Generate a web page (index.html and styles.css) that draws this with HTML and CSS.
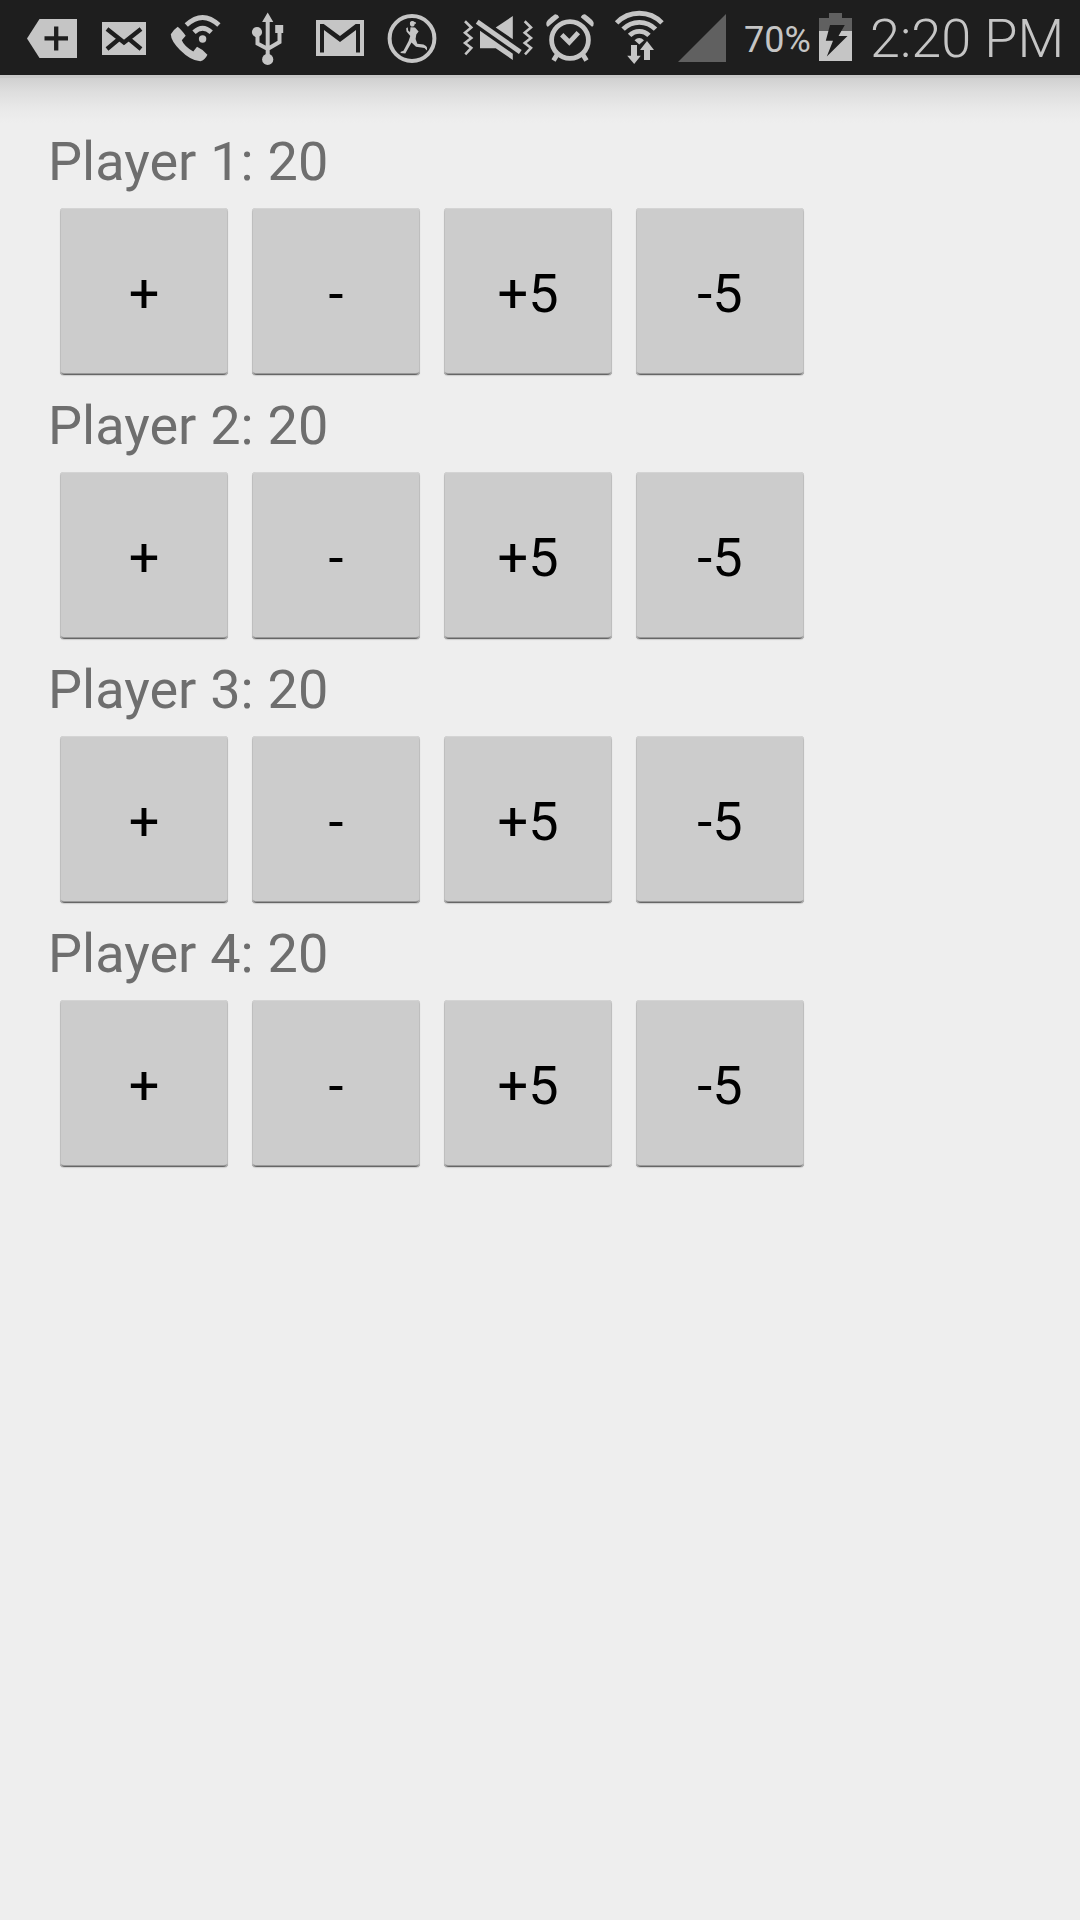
FILE: index.html
```html
<!DOCTYPE html>
<html lang="en">
<head>
<meta charset="utf-8">
<title>Life Counter</title>
<link rel="stylesheet" href="styles.css">
</head>
<body>
<header class="status-bar">
  <svg class="icon" width="90" height="75" viewBox="0 0 90 75"><path d="M27 38.5 39.5 19H77V58H39.5Z"/><path class="cut" d="M44.5 38.3H68M56.2 26.5V50.5"/></svg>
  <svg class="icon" width="70" height="75" viewBox="90 0 70 75"><path d="M102 22h44v33h-44z"/><path class="cut" d="M107 29 124 42.5 141 29M107 49 119 39M141 49 129 39"/></svg>
  <svg class="icon" width="80" height="75" viewBox="160 0 80 75"><path d="M177.7 26.7Q181 29 185.7 35.7L181.8 40.2Q184 46 193.3 51.5L197 46.8Q203 49.5 207.4 54.7Q205 60 200.3 61.3Q191 61 180 50Q171 41 170.8 34.3Q173 30 177.7 26.7Z"/><circle cx="202.6" cy="39" r="3.7"/><path class="line w5" d="M194 32.3Q202.6 24.3 211.2 32.3M186.3 25Q202.6 9.8 218.9 25"/></svg>
  <svg class="icon" width="60" height="75" viewBox="240 0 60 75"><path d="M267.7 12.5 273.3 22H262.1ZM275.2 25h8v8h-8z"/><circle cx="257" cy="32" r="5.1"/><circle cx="267.7" cy="59.4" r="5.6"/><path class="line w4" d="M267.7 20V56M257.5 34V43.5L267.7 49L279.5 42V30"/></svg>
  <svg class="icon" width="80" height="75" viewBox="300 0 80 75"><path d="M316 20h48v36h-48z"/><path class="hole" d="M320 24H323.7L340 36 355.7 24H360V52.5H356V30L340 42 324 30V52.5H320Z"/></svg>
  <svg class="icon" width="70" height="75" viewBox="380 0 70 75"><circle class="line w4" cx="412" cy="38.5" r="22.4"/><ellipse cx="412.3" cy="23.8" rx="2.4" ry="2.8"/><path d="M409.8 22.5Q411.5 20.5 415.8 22.2V24L412 23ZM410.5 27.2 415 27.5 418.6 31.5 416.3 34.5 415.6 39 417.3 43.7 423.5 44.4 426 46 427 47.5V50.5L424.5 48 416 46.7 411.5 42.5 405.3 53.5 400.5 53 400.8 51.8 403.5 50.8 408.6 41 410.3 36 406.5 31.6 406.2 28.3 407.7 27.3 408.2 30.8 410 32Z"/></svg>
  <svg class="icon" width="90" height="75" viewBox="450 0 90 75"><path d="M512.8 16V39.3L495.7 27.5ZM480 30.8 512.8 53.7V60L495.7 48.3H480Z"/><path class="line w5" d="M477.2 21.7 520.3 52"/><path class="line w2" d="M465 21.3 471.3 27.5 465 32.8 471.3 38 465 43 471.3 48 465.3 54.3M524.7 21.3 531 27.5 524.7 32.8 531 38 524.7 43 531 48 525 54.3"/></svg>
  <svg class="icon" width="60" height="75" viewBox="540 0 60 75"><circle class="line w5" cx="570" cy="40" r="18.4"/><path class="line w5" d="M561.7 34.8 569.3 42.3 578.3 32.7M557.5 54 553.5 60.5M582.5 54 586.5 60.5"/><path d="M546.3 23.5Q546 20.5 555 14.3Q558 14.2 559.2 17.2L548 26.7Q546.2 26.5 546.3 23.5ZM593.7 23.5Q594 20.5 585 14.3Q582 14.2 580.8 17.2L592 26.7Q593.8 26.5 593.7 23.5Z"/></svg>
  <svg class="icon" width="65" height="75" viewBox="600 0 65 75"><path class="line w5" d="M616.6 22.9A31.5 31.5 0 0 1 662 22.9M623.1 29.2A22.5 22.5 0 0 1 655.5 29.2M629.6 35.4A13.5 13.5 0 0 1 649 35.4"/><path d="M634.5 40.2Q639.3 35.6 644 40.2L639.3 44.6ZM631 45H637V55.7H640.8L634.2 64 627.2 55.7H631ZM647 41 654 50H650V60H644V50H640Z"/></svg>
  <svg class="icon" width="79" height="75" viewBox="665 0 79 75"><path class="dim" d="M678 62 726 14V62Z"/></svg>
  <span class="battery-level">70%</span>
  <svg class="icon" width="45" height="75" viewBox="815 0 45 75"><path class="dim" d="M819 18H829V13H842V18H852V31H819Z"/><path d="M819 31h33v30h-33z"/><path class="hole" d="M830 25H844.8L838.5 36H847.5L826.8 56.5 833 40.7H825.8Z"/></svg>
  <time class="clock">2:20 PM</time>
</header>
<main class="players">
  <section class="player">
    <h2 class="score">Player 1: 20</h2>
    <div class="controls"><button>+</button><button>-</button><button>+5</button><button>-5</button></div>
  </section>
  <section class="player">
    <h2 class="score">Player 2: 20</h2>
    <div class="controls"><button>+</button><button>-</button><button>+5</button><button>-5</button></div>
  </section>
  <section class="player">
    <h2 class="score">Player 3: 20</h2>
    <div class="controls"><button>+</button><button>-</button><button>+5</button><button>-5</button></div>
  </section>
  <section class="player">
    <h2 class="score">Player 4: 20</h2>
    <div class="controls"><button>+</button><button>-</button><button>+5</button><button>-5</button></div>
  </section>
</main>
</body>
</html>
```
FILE: styles.css
```css
* { box-sizing: border-box; }

body {
  margin: 0;
  width: 1080px;
  height: 1920px;
  overflow: hidden;
  background: #eee;
  font-family: Roboto, "Liberation Sans", sans-serif;
}

.status-bar {
  display: flex;
  height: 75px;
  background: #1e1e1e;
  color: #c5c5c5;
}

.icon { flex: none; fill: #c5c5c5; }
.icon .dim { fill: #606060; }
.icon .hole { fill: #1e1e1e; }
.icon .cut { fill: none; stroke: #1e1e1e; stroke-width: 4.3; }
.icon .line { fill: none; stroke: #c5c5c5; }
.icon .w2 { stroke-width: 2.6; }
.icon .w4 { stroke-width: 4; }
.icon .w5 { stroke-width: 4.8; }

.battery-level {
  flex: none;
  width: 71px;
  font-size: 36px;
  line-height: 80px;
}

.clock {
  flex: none;
  padding-left: 10px;
  font-size: 54px;
  font-weight: 300;
  line-height: 77px;
  white-space: nowrap;
}

.players {
  height: 1845px;
  padding: 51px 48px 0;
  background: linear-gradient(#c8c8c8 0 3px, #d0d0d0 3px, #dedede 17px, #e9e9e9 34px, #eee 48px) no-repeat 0 0 / 100% 48px;
}

.player { height: 264px; }

.score {
  margin: 0;
  height: 82px;
  color: #6e6e6e;
  font-size: 54px;
  font-weight: 400;
  line-height: 71px;
  word-spacing: 0.5px;
}

.controls {
  display: flex;
  gap: 24px;
  padding-left: 12px;
}

.controls button {
  width: 168px;
  height: 167px;
  padding: 3px 0 0;
  border: 0;
  border-radius: 4px;
  background: #ccc;
  box-shadow: inset 0 1px #d4d4d4, inset 1px 0 #bebebe, inset -1px 0 #bebebe, inset 0 -1px #666, inset 0 -2px #999, 0 1px 1px #ccc;
  color: #000;
  font: 400 54px Roboto, "Liberation Sans", sans-serif;
}
```
